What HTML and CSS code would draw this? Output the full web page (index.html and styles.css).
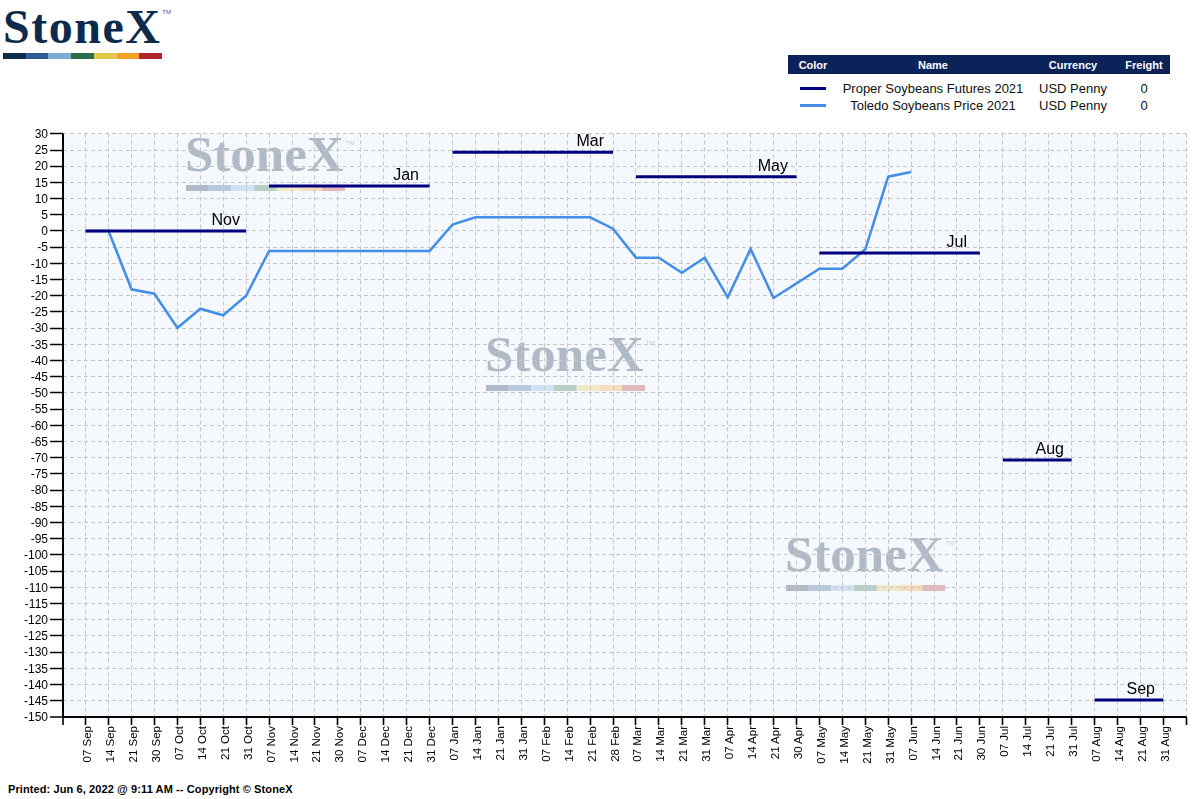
FILE: index.html
```html
<!DOCTYPE html>
<html lang="en">
<head>
<meta charset="utf-8">
<title>StoneX Chart</title>
<link rel="stylesheet" href="styles.css">
</head>
<body>
<header class="top">
  <div class="logo">
    <div class="logo-word">StoneX<span class="tm">TM</span></div>
    <div class="logo-bar"><span class="c1"></span><span class="c2"></span><span class="c3"></span><span class="c4"></span><span class="c5"></span><span class="c6"></span><span class="c7"></span></div>
  </div>
  <table class="legend">
    <colgroup><col class="col-color"><col class="col-name"><col class="col-cur"><col class="col-fr"></colgroup>
    <thead>
      <tr><th>Color</th><th>Name</th><th>Currency</th><th>Freight</th></tr>
    </thead>
    <tbody>
      <tr><td><div class="swatch sw-fut"></div></td><td>Proper Soybeans Futures 2021</td><td>USD Penny</td><td>0</td></tr>
      <tr><td><div class="swatch sw-tol"></div></td><td>Toledo Soybeans Price 2021</td><td>USD Penny</td><td>0</td></tr>
    </tbody>
  </table>
</header>

<svg class="chart" width="1198" height="650" viewBox="0 120 1198 650" xmlns="http://www.w3.org/2000/svg">
  <defs>
    <g id="wm">
      <text class="wm-text" x="185" y="171">StoneX</text>
      <text class="wm-tm" x="346" y="145">TM</text>
      <rect x="186" y="185" width="22.7" height="6" fill="#0e2b4b"/>
      <rect x="208.7" y="185" width="22.7" height="6" fill="#2e5b93"/>
      <rect x="231.4" y="185" width="22.7" height="6" fill="#7eaad6"/>
      <rect x="254.1" y="185" width="22.7" height="6" fill="#2b6f4a"/>
      <rect x="276.8" y="185" width="22.7" height="6" fill="#e0c84c"/>
      <rect x="299.5" y="185" width="22.7" height="6" fill="#f2a225"/>
      <rect x="322.2" y="185" width="22.8" height="6" fill="#b1262a"/>
    </g>
  </defs>

  <rect class="plot-bg" x="63" y="133.5" width="1123.5" height="583.5"/>

  <g class="watermarks">
    <use href="#wm"/>
    <use href="#wm" x="300" y="200"/>
    <use href="#wm" x="600" y="400"/>
  </g>

  <path class="grid" d="M85.5 133.5V717M108.5 133.5V717M131.5 133.5V717M154.5 133.5V717M177.5 133.5V717M200.5 133.5V717M223.5 133.5V717M246.5 133.5V717M269.5 133.5V717M292.5 133.5V717M314.5 133.5V717M337.5 133.5V717M360.5 133.5V717M383.5 133.5V717M406.5 133.5V717M429.5 133.5V717M452.5 133.5V717M475.5 133.5V717M498.5 133.5V717M521.5 133.5V717M544.5 133.5V717M567.5 133.5V717M590.5 133.5V717M613.5 133.5V717M635.5 133.5V717M658.5 133.5V717M681.5 133.5V717M704.5 133.5V717M727.5 133.5V717M750.5 133.5V717M773.5 133.5V717M796.5 133.5V717M819.5 133.5V717M842.5 133.5V717M865.5 133.5V717M888.5 133.5V717M911.5 133.5V717M934.5 133.5V717M956.5 133.5V717M979.5 133.5V717M1002.5 133.5V717M1025.5 133.5V717M1048.5 133.5V717M1071.5 133.5V717M1094.5 133.5V717M1117.5 133.5V717M1140.5 133.5V717M1163.5 133.5V717M1186.5 133.5V717"/>
  <path class="grid" d="M63 133.5H1186.5M63 150.5H1186.5M63 166.5H1186.5M63 182.5H1186.5M63 198.5H1186.5M63 214.5H1186.5M63 230.5H1186.5M63 247.5H1186.5M63 263.5H1186.5M63 279.5H1186.5M63 295.5H1186.5M63 311.5H1186.5M63 328.5H1186.5M63 344.5H1186.5M63 360.5H1186.5M63 376.5H1186.5M63 392.5H1186.5M63 409.5H1186.5M63 425.5H1186.5M63 441.5H1186.5M63 457.5H1186.5M63 473.5H1186.5M63 490.5H1186.5M63 506.5H1186.5M63 522.5H1186.5M63 538.5H1186.5M63 554.5H1186.5M63 571.5H1186.5M63 587.5H1186.5M63 603.5H1186.5M63 619.5H1186.5M63 635.5H1186.5M63 652.5H1186.5M63 668.5H1186.5M63 684.5H1186.5M63 700.5H1186.5"/>

  <path class="axis" d="M63 133.5V717H1186.5"/>
  <path class="ticks" d="M50 133.5H63M50 150.5H63M50 166.5H63M50 182.5H63M50 198.5H63M50 214.5H63M50 230.5H63M50 247.5H63M50 263.5H63M50 279.5H63M50 295.5H63M50 311.5H63M50 328.5H63M50 344.5H63M50 360.5H63M50 376.5H63M50 392.5H63M50 409.5H63M50 425.5H63M50 441.5H63M50 457.5H63M50 473.5H63M50 490.5H63M50 506.5H63M50 522.5H63M50 538.5H63M50 554.5H63M50 571.5H63M50 587.5H63M50 603.5H63M50 619.5H63M50 635.5H63M50 652.5H63M50 668.5H63M50 684.5H63M50 700.5H63M50 717H63"/>
  <path class="ticks" d="M63 717V725M85.5 717V725M108.5 717V725M131.5 717V725M154.5 717V725M177.5 717V725M200.5 717V725M223.5 717V725M246.5 717V725M269.5 717V725M292.5 717V725M314.5 717V725M337.5 717V725M360.5 717V725M383.5 717V725M406.5 717V725M429.5 717V725M452.5 717V725M475.5 717V725M498.5 717V725M521.5 717V725M544.5 717V725M567.5 717V725M590.5 717V725M613.5 717V725M635.5 717V725M658.5 717V725M681.5 717V725M704.5 717V725M727.5 717V725M750.5 717V725M773.5 717V725M796.5 717V725M819.5 717V725M842.5 717V725M865.5 717V725M888.5 717V725M911.5 717V725M934.5 717V725M956.5 717V725M979.5 717V725M1002.5 717V725M1025.5 717V725M1048.5 717V725M1071.5 717V725M1094.5 717V725M1117.5 717V725M1140.5 717V725M1163.5 717V725M1186.5 717V725"/>

  <g class="ylab">
    <text x="48" y="138">30</text>
    <text x="48" y="154.2">25</text>
    <text x="48" y="170.4">20</text>
    <text x="48" y="186.6">15</text>
    <text x="48" y="202.8">10</text>
    <text x="48" y="219">5</text>
    <text x="48" y="235.2">0</text>
    <text x="48" y="251.4">-5</text>
    <text x="48" y="267.6">-10</text>
    <text x="48" y="283.8">-15</text>
    <text x="48" y="300">-20</text>
    <text x="48" y="316.2">-25</text>
    <text x="48" y="332.4">-30</text>
    <text x="48" y="348.6">-35</text>
    <text x="48" y="364.8">-40</text>
    <text x="48" y="381">-45</text>
    <text x="48" y="397.2">-50</text>
    <text x="48" y="413.4">-55</text>
    <text x="48" y="429.5">-60</text>
    <text x="48" y="445.7">-65</text>
    <text x="48" y="461.9">-70</text>
    <text x="48" y="478.1">-75</text>
    <text x="48" y="494.3">-80</text>
    <text x="48" y="510.5">-85</text>
    <text x="48" y="526.7">-90</text>
    <text x="48" y="542.9">-95</text>
    <text x="48" y="559.1">-100</text>
    <text x="48" y="575.3">-105</text>
    <text x="48" y="591.5">-110</text>
    <text x="48" y="607.7">-115</text>
    <text x="48" y="623.9">-120</text>
    <text x="48" y="640.1">-125</text>
    <text x="48" y="656.3">-130</text>
    <text x="48" y="672.5">-135</text>
    <text x="48" y="688.7">-140</text>
    <text x="48" y="704.9">-145</text>
    <text x="48" y="721.1">-150</text>
  </g>

  <g class="xlab">
    <text transform="translate(90.5 726) rotate(-90)">07 Sep</text>
    <text transform="translate(113.5 726) rotate(-90)">14 Sep</text>
    <text transform="translate(136.5 726) rotate(-90)">21 Sep</text>
    <text transform="translate(159.5 726) rotate(-90)">30 Sep</text>
    <text transform="translate(182.5 726) rotate(-90)">07 Oct</text>
    <text transform="translate(205.5 726) rotate(-90)">14 Oct</text>
    <text transform="translate(228.5 726) rotate(-90)">21 Oct</text>
    <text transform="translate(251.5 726) rotate(-90)">31 Oct</text>
    <text transform="translate(274.5 726) rotate(-90)">07 Nov</text>
    <text transform="translate(297.5 726) rotate(-90)">14 Nov</text>
    <text transform="translate(319.5 726) rotate(-90)">21 Nov</text>
    <text transform="translate(342.5 726) rotate(-90)">30 Nov</text>
    <text transform="translate(365.5 726) rotate(-90)">07 Dec</text>
    <text transform="translate(388.5 726) rotate(-90)">14 Dec</text>
    <text transform="translate(411.5 726) rotate(-90)">21 Dec</text>
    <text transform="translate(434.5 726) rotate(-90)">31 Dec</text>
    <text transform="translate(457.5 726) rotate(-90)">07 Jan</text>
    <text transform="translate(480.5 726) rotate(-90)">14 Jan</text>
    <text transform="translate(503.5 726) rotate(-90)">21 Jan</text>
    <text transform="translate(526.5 726) rotate(-90)">31 Jan</text>
    <text transform="translate(549.5 726) rotate(-90)">07 Feb</text>
    <text transform="translate(572.5 726) rotate(-90)">14 Feb</text>
    <text transform="translate(595.5 726) rotate(-90)">21 Feb</text>
    <text transform="translate(618.5 726) rotate(-90)">28 Feb</text>
    <text transform="translate(640.5 726) rotate(-90)">07 Mar</text>
    <text transform="translate(663.5 726) rotate(-90)">14 Mar</text>
    <text transform="translate(686.5 726) rotate(-90)">21 Mar</text>
    <text transform="translate(709.5 726) rotate(-90)">31 Mar</text>
    <text transform="translate(732.5 726) rotate(-90)">07 Apr</text>
    <text transform="translate(755.5 726) rotate(-90)">14 Apr</text>
    <text transform="translate(778.5 726) rotate(-90)">21 Apr</text>
    <text transform="translate(801.5 726) rotate(-90)">30 Apr</text>
    <text transform="translate(824.5 726) rotate(-90)">07 May</text>
    <text transform="translate(847.5 726) rotate(-90)">14 May</text>
    <text transform="translate(870.5 726) rotate(-90)">21 May</text>
    <text transform="translate(893.5 726) rotate(-90)">31 May</text>
    <text transform="translate(916.5 726) rotate(-90)">07 Jun</text>
    <text transform="translate(939.5 726) rotate(-90)">14 Jun</text>
    <text transform="translate(961.5 726) rotate(-90)">21 Jun</text>
    <text transform="translate(984.5 726) rotate(-90)">30 Jun</text>
    <text transform="translate(1007.5 726) rotate(-90)">07 Jul</text>
    <text transform="translate(1030.5 726) rotate(-90)">14 Jul</text>
    <text transform="translate(1053.5 726) rotate(-90)">21 Jul</text>
    <text transform="translate(1076.5 726) rotate(-90)">31 Jul</text>
    <text transform="translate(1099.5 726) rotate(-90)">07 Aug</text>
    <text transform="translate(1122.5 726) rotate(-90)">14 Aug</text>
    <text transform="translate(1145.5 726) rotate(-90)">21 Aug</text>
    <text transform="translate(1168.5 726) rotate(-90)">31 Aug</text>
  </g>

  <polyline class="toledo" points="85.6,231 108.6,231 131.5,289.3 154.4,293.7 177.4,328 200.3,308.7 223.2,315.3 246.1,295.7 269.1,251 429.6,251 452.5,224.5 475.4,217.3 590.1,217.3 613,228.7 636,257.7 658.9,257.7 681.8,272.7 704.7,257.7 727.7,297.3 750.6,249 773.5,298 819.4,268.7 842.3,268.7 865.3,249.3 888.2,176.7 911.1,172"/>

  <path class="fut" d="M85.6 231H246.1M269.1 186H429.6M452.5 152.3H613M636 176.7H796.5M819.4 253H979.9M1002.8 460H1071.6M1094.6 700H1163.3"/>

  <g class="mon">
    <text x="240" y="225">Nov</text>
    <text x="419" y="180">Jan</text>
    <text x="604" y="146">Mar</text>
    <text x="788" y="171">May</text>
    <text x="967" y="247">Jul</text>
    <text x="1064" y="454">Aug</text>
    <text x="1155" y="694">Sep</text>
  </g>
</svg>

<footer class="printed">Printed: Jun 6, 2022 @ 9:11 AM -- Copyright © StoneX</footer>
</body>
</html>
```

FILE: styles.css
```css
html, body {
  margin: 0;
  padding: 0;
  background: #ffffff;
}

body {
  width: 1198px;
  height: 799px;
  overflow: hidden;
  font-family: "Liberation Sans", Arial, sans-serif;
  color: #000;
}

.top {
  display: flex;
  justify-content: space-between;
  align-items: flex-start;
  height: 120px;
}

.logo {
  padding-left: 3px;
  width: 175px;
}

.logo-word {
  font-family: "Liberation Serif", "Times New Roman", serif;
  font-weight: bold;
  font-size: 48px;
  line-height: 53px;
  letter-spacing: 1.5px;
  color: #0e2b4b;
  white-space: nowrap;
}

.tm {
  font-family: "Liberation Sans", Arial, sans-serif;
  font-weight: normal;
  font-size: 6px;
  line-height: 1;
  letter-spacing: 0;
  vertical-align: 29px;
  margin-left: 1px;
  color: #555;
}

.logo-bar {
  display: flex;
  width: 159px;
  height: 6px;
}

.logo-bar span { flex: 1; }
.c1 { background: #0e2b4b; }
.c2 { background: #2e5b93; }
.c3 { background: #7eaad6; }
.c4 { background: #2b6f4a; }
.c5 { background: #e0c84c; }
.c6 { background: #f2a225; }
.c7 { background: #b1262a; }

.legend {
  margin-top: 55px;
  margin-right: 28px;
  width: 382px;
  border-collapse: collapse;
  table-layout: fixed;
}

.col-color { width: 50px; }
.col-name { width: 190px; }
.col-cur { width: 90px; }
.col-fr { width: 52px; }

.legend th {
  background: #0b2358;
  color: #fff;
  font-size: 11px;
  font-weight: bold;
  height: 19px;
  padding: 0;
  text-align: center;
}

.legend td {
  font-size: 13px;
  height: 17px;
  line-height: 17px;
  padding: 0;
  text-align: center;
  color: #111;
  white-space: nowrap;
}

.legend tbody tr:first-child td {
  padding-top: 6px;
}

.swatch {
  width: 26px;
  height: 3px;
  margin: 0 auto;
}

.sw-fut { background: #000080; }
.sw-tol { background: #428ee8; }

.chart {
  display: block;
}

.plot-bg { fill: #f5f8fd; }

.watermarks { opacity: 0.3; }

.wm-text {
  font-family: "Liberation Serif", "Times New Roman", serif;
  font-weight: bold;
  font-size: 51px;
  fill: #0e2b4b;
}

.wm-tm {
  font-family: "Liberation Sans", Arial, sans-serif;
  font-size: 6px;
  fill: #555;
}

.grid {
  fill: none;
  stroke: #c6c6c6;
  stroke-width: 1;
  stroke-dasharray: 4 3;
}

.axis {
  fill: none;
  stroke: #000;
  stroke-width: 2;
}

.ticks {
  fill: none;
  stroke: #000;
  stroke-width: 1.6;
}

.ylab text {
  font-family: "Liberation Sans", Arial, sans-serif;
  font-size: 12px;
  text-anchor: end;
  fill: #000;
}

.xlab text {
  font-family: "Liberation Sans", Arial, sans-serif;
  font-size: 11.5px;
  text-anchor: end;
  fill: #000;
}

.toledo {
  fill: none;
  stroke: #428ee8;
  stroke-width: 2.5;
  stroke-linejoin: miter;
}

.fut {
  fill: none;
  stroke: #000080;
  stroke-width: 3;
}

.mon text {
  font-family: "Liberation Sans", Arial, sans-serif;
  font-size: 16px;
  text-anchor: end;
  fill: #000;
}

.printed {
  font-family: "Liberation Sans", Arial, sans-serif;
  font-weight: bold;
  font-size: 11px;
  line-height: 14px;
  letter-spacing: 0.1px;
  padding: 12px 0 0 8px;
}
```
